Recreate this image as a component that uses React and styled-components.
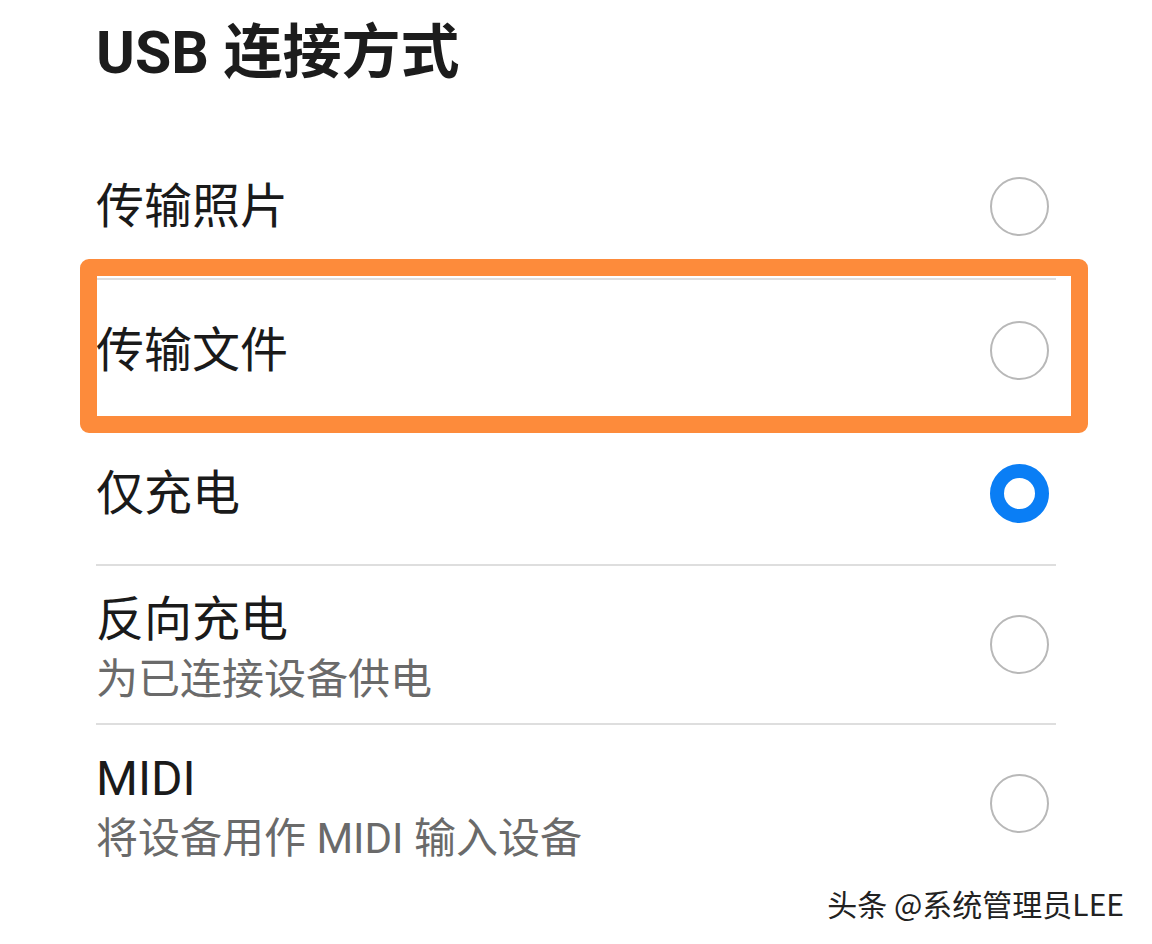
import React from "react";
import styled, { createGlobalStyle } from "styled-components";

const GlobalStyle = createGlobalStyle`
  html, body {
    margin: 0;
    padding: 0;
    background: #ffffff;
  }
  body {
    font-family: Roboto, "Noto Sans CJK SC", sans-serif;
    -webkit-font-smoothing: antialiased;
  }
`;

const Page = styled.div`
  width: 1152px;
  height: 944px;
  box-sizing: border-box;
  padding: 0 96px;
  position: relative;
  overflow: hidden;
  background: #fff;
`;

const Header = styled.h1`
  margin: 0;
  height: 135px;
  box-sizing: border-box;
  padding-top: 23px;
  font-size: 59px;
  line-height: 60px;
  font-weight: 700;
  color: #1c1c1c;
`;

const List = styled.div`
  display: flex;
  flex-direction: column;
`;

const Row = styled.div`
  position: relative;
  display: flex;
  align-items: center;
  justify-content: space-between;
  box-sizing: border-box;
  height: ${(p) => (p.$tall ? 159 : 143)}px;
  border-top: ${(p) => (p.$first ? "none" : "2px solid #dedede")};
`;

const Texts = styled.div`
  display: flex;
  flex-direction: column;
  padding-top: ${(p) => (p.$tall ? 10 : 0)}px;
`;

const Label = styled.div`
  font-size: 48px;
  line-height: 60px;
  color: #1a1a1a;
`;

const Sub = styled.div`
  font-size: 42px;
  line-height: 60px;
  color: #6a6a6a;
`;

const Radio = styled.span`
  flex: none;
  box-sizing: border-box;
  width: 59px;
  height: 59px;
  margin-right: 7px;
  border-radius: 50%;
  border: ${(p) => (p.$checked ? "14px solid #0a7ef5" : "2.5px solid #b8b8b8")};
  background: #fff;
`;

const Highlight = styled.div`
  position: absolute;
  z-index: 2;
  top: -21px;
  left: -16px;
  right: -32px;
  bottom: -12px;
  border: 17px solid #fd8b3b;
  border-radius: 9px;
  pointer-events: none;
`;

const Watermark = styled.div`
  position: absolute;
  right: 28px;
  bottom: 24px;
  font-family: "Noto Sans CJK SC", sans-serif;
  font-size: 30px;
  line-height: 34px;
  color: #222;
  text-shadow: 1px 1px 0 #fff, -1px -1px 0 rgba(255, 255, 255, 0.8);
`;

const items = [
  { label: "传输照片" },
  { label: "传输文件", highlight: true },
  { label: "仅充电", checked: true },
  { label: "反向充电", sub: "为已连接设备供电" },
  { label: "MIDI", sub: "将设备用作 MIDI 输入设备" },
];

export default function App() {
  return (
    <Page>
      <GlobalStyle />
      <Header>USB 连接方式</Header>
      <List>
        {items.map((item, i) => (
          <Row key={item.label} $first={i === 0} $tall={!!item.sub}>
            <Texts $tall={!!item.sub}>
              <Label>{item.label}</Label>
              {item.sub && <Sub>{item.sub}</Sub>}
            </Texts>
            <Radio $checked={item.checked} />
            {item.highlight && <Highlight />}
          </Row>
        ))}
      </List>
      <Watermark>头条 @系统管理员LEE</Watermark>
    </Page>
  );
}
